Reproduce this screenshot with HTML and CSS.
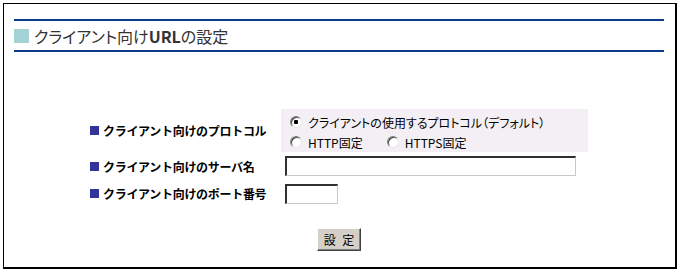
FILE: index.html
```html
<!doctype html>
<html>
  <head>
    <meta charset="UTF-8" />
    <title>クライアント向けURLの設定</title>
    <link rel="stylesheet" href="styles.css">
  </head>
  <body>
    <div class="frame">
      <div class="page-head">
        <span class="head-mark"></span>
        <h1>クライアント向け<span class="latin">URL</span>の設定</h1>
      </div>
      <form class="settings" onsubmit="return false">
        <div class="label"><span class="mark"></span>クライアント向けのプロトコル</div>
        <div class="value protocol">
          <label class="choice">
            <input type="radio" name="protocol" value="default" checked />
            クライアントの使用するプロトコル（デフォルト）
          </label>
          <div class="choice-line">
            <label class="choice">
              <input type="radio" name="protocol" value="http" />
              HTTP固定
            </label>
            <label class="choice">
              <input type="radio" name="protocol" value="https" />
              HTTPS固定
            </label>
          </div>
        </div>

        <div class="label"><span class="mark"></span>クライアント向けのサーバ名</div>
        <div class="value">
          <input type="text" class="text-input server" name="server" />
        </div>

        <div class="label"><span class="mark"></span>クライアント向けのポート番号</div>
        <div class="value">
          <input type="text" class="text-input port" name="port" />
        </div>

        <div class="actions">
          <button type="submit">設 定</button>
        </div>
      </form>
    </div>
  </body>
</html>
```

FILE: styles.css
```css
html,
body {
  margin: 0;
  background: #fff;
}

body {
  font-family: "Noto Sans CJK JP", "Noto Sans", sans-serif;
  font-size: 12px;
  color: #000;
}

.frame {
  box-sizing: border-box;
  width: 674px;
  height: 266px;
  margin: 3px;
  padding: 15px 11px 0 10px;
  border: 1px solid #000;
  border-right-width: 2px;
  border-bottom-width: 2px;
}

.page-head {
  display: flex;
  align-items: center;
  height: 29px;
  border-top: 2px solid #0b3a8a;
  border-bottom: 2px solid #0b3a8a;
}

.head-mark {
  width: 15px;
  height: 14px;
  margin-right: 5px;
  background: #a3d3d6;
}

.page-head h1 {
  margin: 0;
  font-size: 16px;
  font-weight: normal;
  line-height: 18px;
  color: #333;
  font-feature-settings: "palt";
}

.page-head .latin {
  font-weight: bold;
}

.settings {
  display: grid;
  grid-template-columns: 191px 307px;
  grid-template-rows: 43px 28px 27px;
  width: 498px;
  margin: 57px auto 0;
}

.label {
  display: flex;
  align-items: center;
  font-weight: bold;
  letter-spacing: -0.3px;
}

.mark {
  width: 9px;
  height: 9px;
  margin-right: 4px;
  background: #33339a;
}

.value {
  display: flex;
  align-items: center;
  padding-left: 4px;
}

.protocol {
  flex-direction: column;
  align-items: flex-start;
  justify-content: flex-start;
  padding: 3px 0 0 9px;
  background: #f4eff4;
}

.choice-line {
  display: flex;
  gap: 24px;
}

.choice {
  display: flex;
  align-items: center;
  height: 20px;
  font-feature-settings: "palt";
}

.choice input {
  appearance: none;
  box-sizing: border-box;
  width: 12px;
  height: 12px;
  margin: 0 6px 0 0;
  border-radius: 50%;
  border: 1px solid;
  border-color: #808080 #e8e8e8 #e8e8e8 #808080;
  background: #fff;
  box-shadow: inset 1px 1px 0 #404040;
}

.choice input:checked {
  background: radial-gradient(circle, #000 0 2px, #fff 2.5px);
}

.text-input {
  box-sizing: border-box;
  height: 20px;
  margin: 0;
  padding: 1px 3px;
  font: inherit;
  border-style: solid;
  border-width: 2px 1px 1px 2px;
  border-color: #303030 #c8c8c8 #c8c8c8 #303030;
  background: #fff;
  outline: none;
}

.server {
  width: 291px;
}

.port {
  width: 53px;
}

.actions {
  grid-column: 1 / 3;
  display: flex;
  justify-content: center;
  margin-top: 21px;
}

button {
  box-sizing: border-box;
  width: 44px;
  height: 23px;
  padding: 0;
  font: inherit;
  word-spacing: 4px;
  color: #000;
  background: #d4d0c8;
  border: 1px solid;
  border-color: #fff #404040 #404040 #fff;
  box-shadow: inset -1px -1px 0 #808080;
  cursor: pointer;
}
```
